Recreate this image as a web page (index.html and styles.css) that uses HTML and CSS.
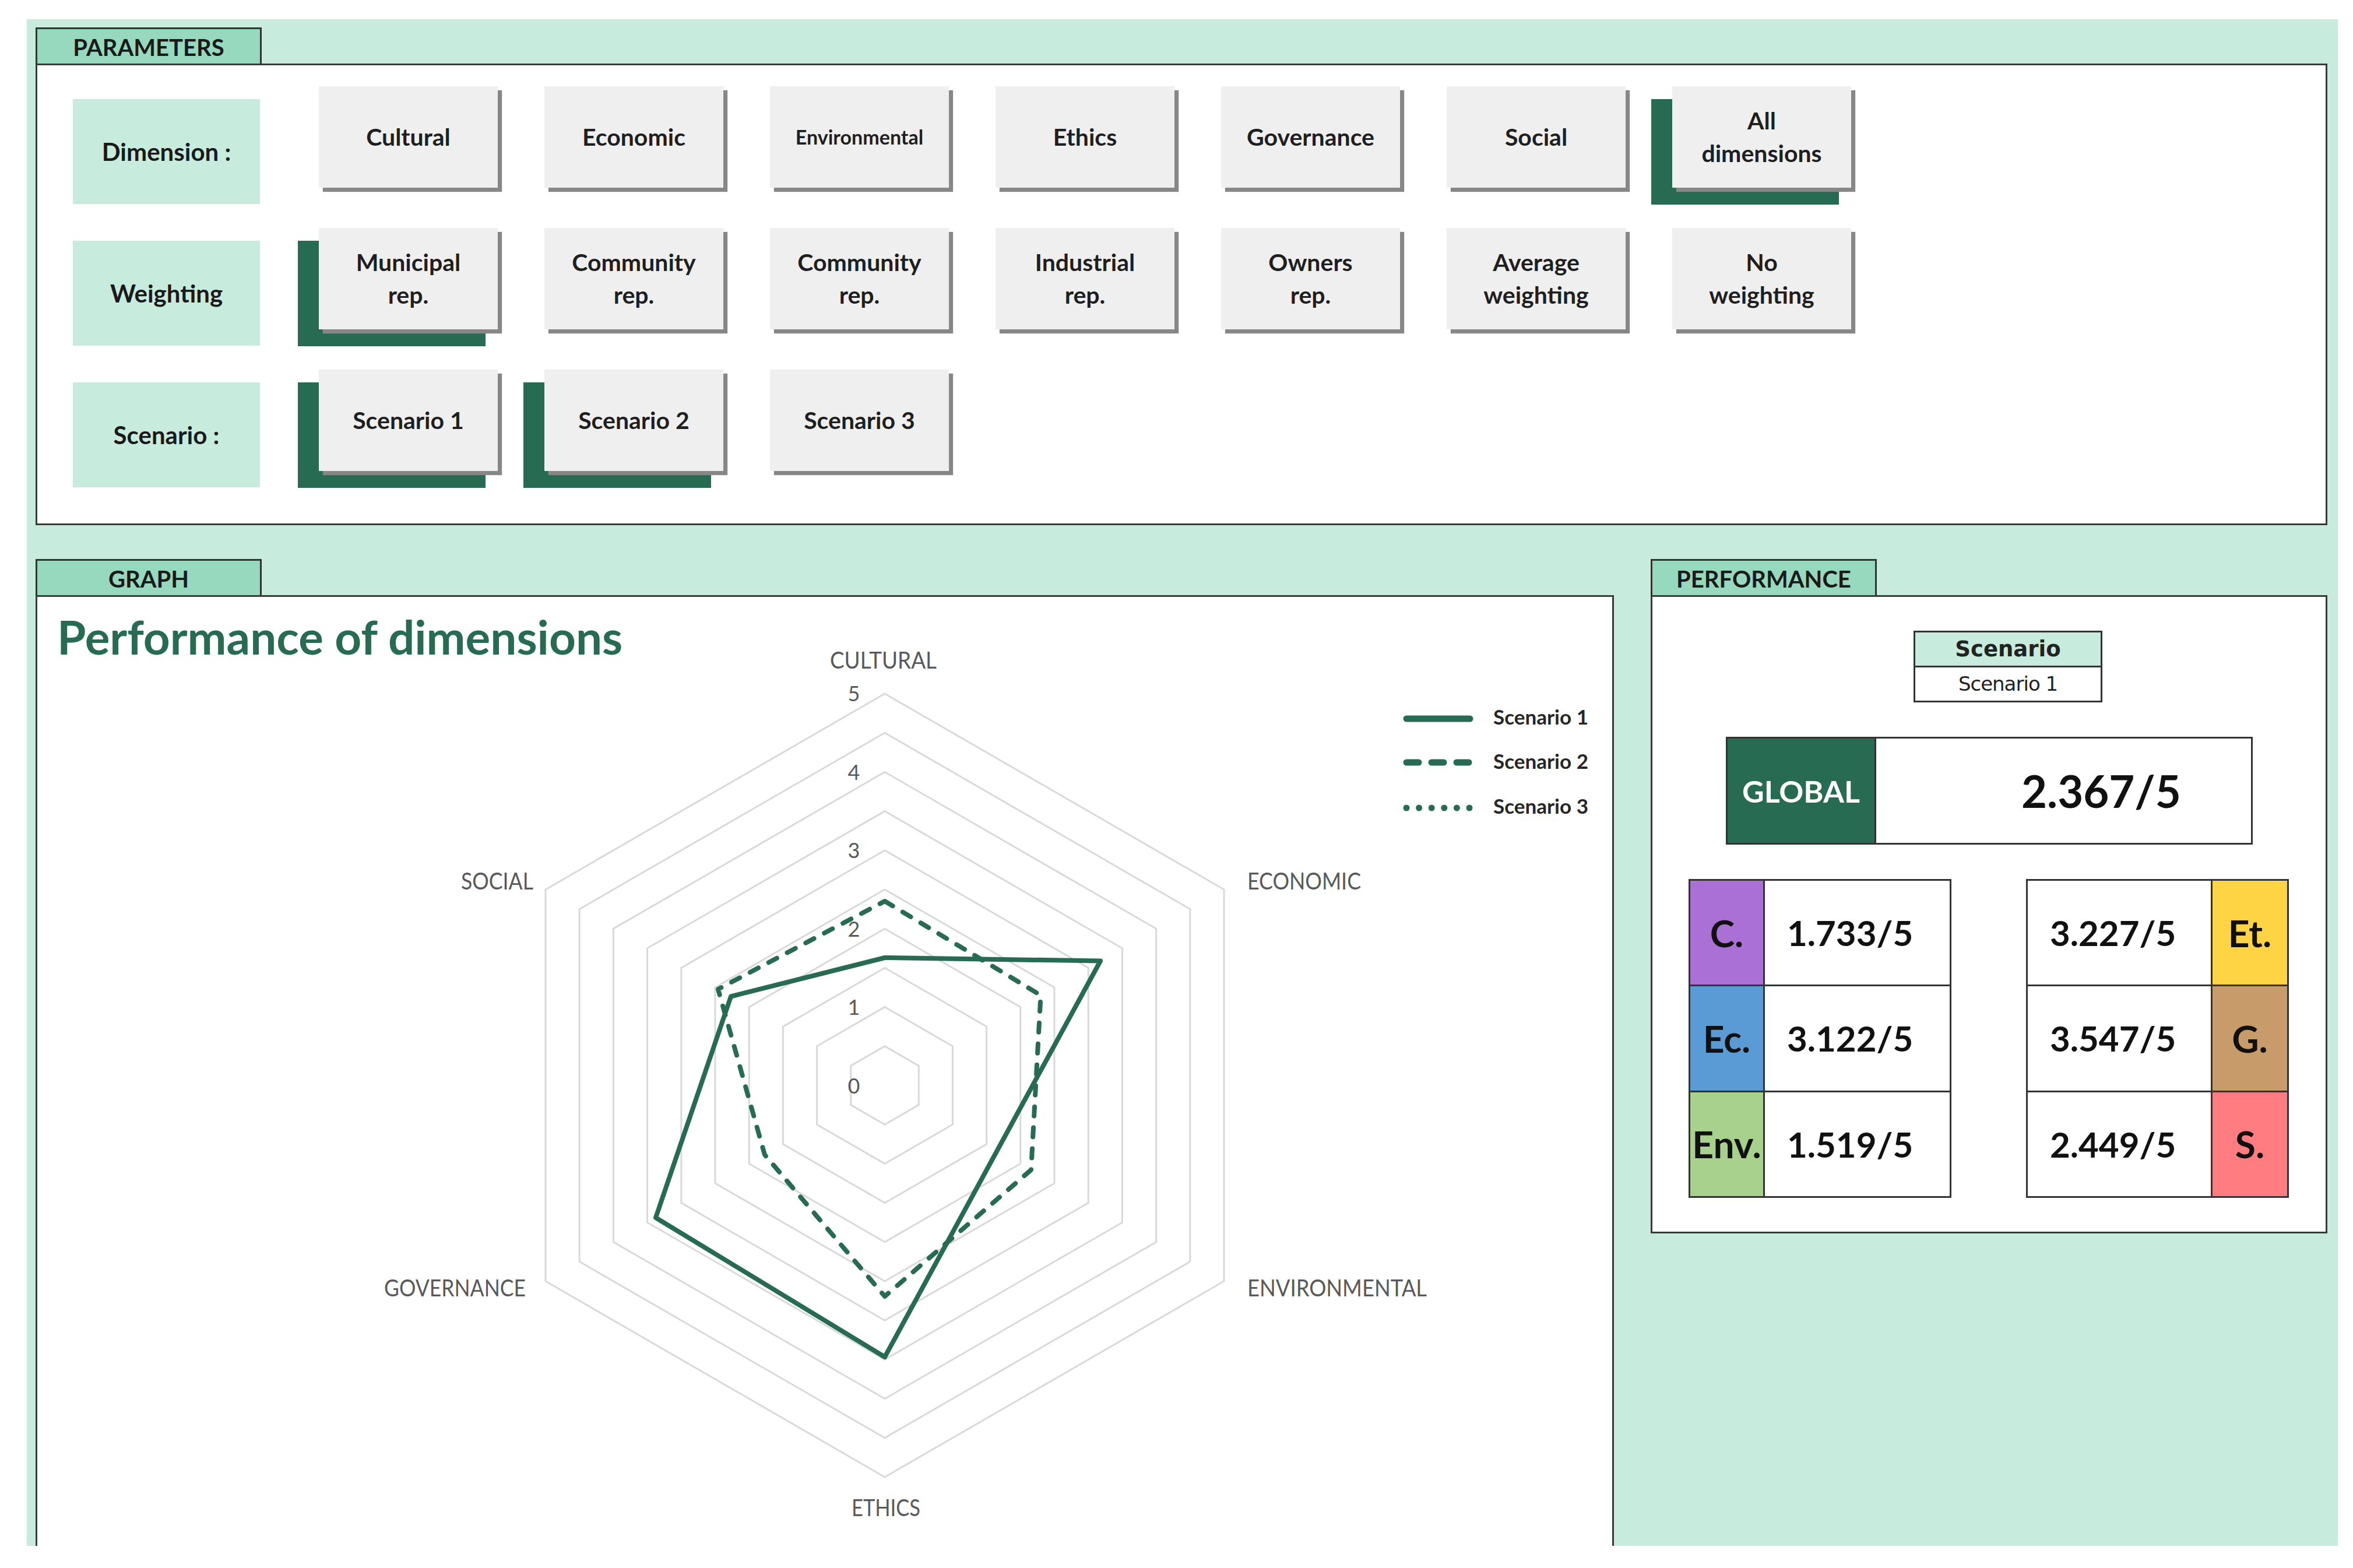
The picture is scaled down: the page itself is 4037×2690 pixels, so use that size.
FILE: index.html
```html
<!DOCTYPE html>
<html lang="en">
<head>
<meta charset="utf-8">
<title>Performance of dimensions</title>
<link rel="stylesheet" href="styles.css">
</head>
<body>
<div class="sheet">
  <section class="panel">
    <div class="tab">PARAMETERS</div>
    <div class="box params-box">
      <div class="prow">
        <div class="plabel">Dimension :</div>
        <div class="slot"><div class="btn">Cultural</div></div>
        <div class="slot"><div class="btn">Economic</div></div>
        <div class="slot"><div class="btn small">Environmental</div></div>
        <div class="slot"><div class="btn">Ethics</div></div>
        <div class="slot"><div class="btn">Governance</div></div>
        <div class="slot"><div class="btn">Social</div></div>
        <div class="slot sel"><div class="btn">All<br>dimensions</div></div>
      </div>
      <div class="prow">
        <div class="plabel">Weighting</div>
        <div class="slot sel"><div class="btn">Municipal<br>rep.</div></div>
        <div class="slot"><div class="btn">Community<br>rep.</div></div>
        <div class="slot"><div class="btn">Community<br>rep.</div></div>
        <div class="slot"><div class="btn">Industrial<br>rep.</div></div>
        <div class="slot"><div class="btn">Owners<br>rep.</div></div>
        <div class="slot"><div class="btn">Average<br>weighting</div></div>
        <div class="slot"><div class="btn">No<br>weighting</div></div>
      </div>
      <div class="prow">
        <div class="plabel">Scenario :</div>
        <div class="slot sel"><div class="btn">Scenario 1</div></div>
        <div class="slot sel"><div class="btn">Scenario 2</div></div>
        <div class="slot"><div class="btn">Scenario 3</div></div>
      </div>
    </div>
  </section>

  <div class="lower">
    <section class="panel graph">
      <div class="tab">GRAPH</div>
      <div class="box graph-box">
        <h2 class="chart-title">Performance of dimensions</h2>
        <svg class="chart" width="2702" height="1610" viewBox="64 1090 2702 1610" xmlns="http://www.w3.org/2000/svg">
          <g class="rings">
            <polygon points="1518,1794.8 1576.2,1828.4 1576.2,1895.6 1518,1929.2 1459.8,1895.6 1459.8,1828.4"/>
            <polygon points="1518,1727.6 1634.4,1794.8 1634.4,1929.2 1518,1996.4 1401.6,1929.2 1401.6,1794.8"/>
            <polygon points="1518,1660.4 1692.6,1761.2 1692.6,1962.8 1518,2063.6 1343.4,1962.8 1343.4,1761.2"/>
            <polygon points="1518,1593.2 1750.8,1727.6 1750.8,1996.4 1518,2130.8 1285.2,1996.4 1285.2,1727.6"/>
            <polygon points="1518,1526 1809,1694 1809,2030 1518,2198 1227,2030 1227,1694"/>
            <polygon points="1518,1458.8 1867.2,1660.4 1867.2,2063.6 1518,2265.2 1168.8,2063.6 1168.8,1660.4"/>
            <polygon points="1518,1391.6 1925.4,1626.8 1925.4,2097.2 1518,2332.4 1110.6,2097.2 1110.6,1626.8"/>
            <polygon points="1518,1324.4 1983.6,1593.2 1983.6,2130.8 1518,2399.6 1052.4,2130.8 1052.4,1593.2"/>
            <polygon points="1518,1257.2 2041.8,1559.6 2041.8,2164.4 1518,2466.8 994.2,2164.4 994.2,1559.6"/>
            <polygon points="1518,1190 2100,1526 2100,2198 1518,2534 936,2198 936,1526"/>
          </g>
          <g class="ticks">
            <text x="1465" y="1203">5</text>
            <text x="1465" y="1338">4</text>
            <text x="1465" y="1472">3</text>
            <text x="1465" y="1607">2</text>
            <text x="1465" y="1741">1</text>
            <text x="1465" y="1876">0</text>
          </g>
          <g class="cats">
            <text x="1424" y="1147" textLength="183" lengthAdjust="spacingAndGlyphs">CULTURAL</text>
            <text x="2140" y="1526" textLength="195" lengthAdjust="spacingAndGlyphs">ECONOMIC</text>
            <text x="2140" y="2224" textLength="308" lengthAdjust="spacingAndGlyphs">ENVIRONMENTAL</text>
            <text x="1461" y="2601" textLength="118" lengthAdjust="spacingAndGlyphs">ETHICS</text>
            <text x="659" y="2224" textLength="243" lengthAdjust="spacingAndGlyphs">GOVERNANCE</text>
            <text x="791" y="1526" textLength="124" lengthAdjust="spacingAndGlyphs">SOCIAL</text>
          </g>
          <polygon class="s2" points="1518,1546 1785.6,1707.5 1769,2007 1518,2224 1312,1981 1232,1697"/>
          <polygon class="s1" points="1518,1643 1888,1648.5 1711,1973.5 1518,2328 1125,2089 1254,1709.5"/>
          <g class="legend">
            <line class="l1" x1="2413" y1="1233" x2="2522" y2="1233"/>
            <line class="l2" x1="2413" y1="1308" x2="2522" y2="1308"/>
            <line class="l3" x1="2413" y1="1386" x2="2525" y2="1386"/>
            <text x="2562" y="1243" textLength="163" lengthAdjust="spacingAndGlyphs">Scenario 1</text>
            <text x="2562" y="1319" textLength="163" lengthAdjust="spacingAndGlyphs">Scenario 2</text>
            <text x="2562" y="1396" textLength="163" lengthAdjust="spacingAndGlyphs">Scenario 3</text>
          </g>
        </svg>
      </div>
    </section>

    <section class="panel perf">
      <div class="tab">PERFORMANCE</div>
      <div class="box perf-box">
        <div class="sc-table">
          <div class="sc-head">Scenario</div>
          <div class="sc-val">Scenario 1</div>
        </div>
        <div class="global">
          <div class="global-label">GLOBAL</div>
          <div class="global-val">2.367/5</div>
        </div>
        <div class="dims">
          <div class="dtable">
            <div class="dk c-cul">C.</div><div class="dv">1.733/5</div>
            <div class="dk c-eco">Ec.</div><div class="dv">3.122/5</div>
            <div class="dk c-env">Env.</div><div class="dv">1.519/5</div>
          </div>
          <div class="dtable right">
            <div class="dv">3.227/5</div><div class="dk c-eth">Et.</div>
            <div class="dv">3.547/5</div><div class="dk c-gov">G.</div>
            <div class="dv">2.449/5</div><div class="dk c-soc">S.</div>
          </div>
        </div>
      </div>
    </section>
  </div>
</div>
</body>
</html>
```

FILE: styles.css
```css
* { box-sizing: border-box; }

html, body {
  margin: 0;
  padding: 0;
  background: #ffffff;
}

body {
  font-family: Lato, "Open Sans", "Liberation Sans", sans-serif;
  color: #1b1b1b;
}

.sheet {
  margin: 33px 0 0 46px;
  width: 3965px;
  height: 2619px;
  background: #c7ebdd;
  padding: 14px 18px 0 15px;
  overflow: hidden;
}

.tab {
  width: 388px;
  height: 62px;
  border: 3px solid #333333;
  border-bottom: 0;
  background: #97d9be;
  font-weight: 700;
  font-size: 40px;
  line-height: 62px;
  text-align: center;
  color: #1a1a1a;
}

.box {
  background: #ffffff;
  border: 3px solid #3a3a3a;
}

/* PARAMETERS */
.params-box {
  display: flex;
  flex-direction: column;
  gap: 63px;
  padding: 58px 0 62px 61px;
}

.prow {
  display: flex;
  gap: 65px;
  height: 180px;
}

.plabel {
  flex: none;
  width: 321px;
  height: 180px;
  background: #c7ebdd;
  display: flex;
  align-items: center;
  justify-content: center;
  font-weight: 700;
  font-size: 42px;
  color: #1a1a1a;
}

.slot {
  flex: none;
  width: 322px;
  height: 181px;
}

.slot.sel {
  background: #276b53;
}

.btn {
  width: 307px;
  height: 174px;
  margin: -22px 0 0 36px;
  background: #efefef;
  box-shadow: 7px 7px 1px #878787;
  display: flex;
  align-items: center;
  justify-content: center;
  text-align: center;
  font-weight: 700;
  font-size: 41px;
  line-height: 56px;
  color: #1f1f1f;
}

.btn.small {
  font-size: 34px;
}

/* LOWER */
.lower {
  display: flex;
  align-items: flex-start;
  gap: 63px;
  margin-top: 58px;
}

.graph {
  flex: none;
  width: 2708px;
}

.graph-box {
  height: 1700px;
  border-bottom: 0;
}

.chart-title {
  margin: 20px 0 0 34px;
  font-size: 80px;
  line-height: 96px;
  font-weight: 700;
  color: #276b53;
}

.chart {
  display: block;
  width: 2702px;
  height: 1610px;
  margin-top: -50px;
}

.rings polygon {
  fill: none;
  stroke: #d9d9d9;
  stroke-width: 3;
}

.ticks text {
  font-family: Lato, sans-serif;
  font-size: 36px;
  fill: #595959;
  text-anchor: middle;
}

.cats text {
  font-family: Lato, sans-serif;
  font-size: 40px;
  fill: #595959;
}

.s1, .s2 {
  fill: none;
  stroke: #276b53;
  stroke-width: 8;
  stroke-linejoin: round;
}

.s2 {
  stroke-dasharray: 16 20;
  stroke-linecap: round;
}

.legend line {
  stroke: #276b53;
  stroke-width: 11;
  stroke-linecap: round;
}

.legend .l2 {
  stroke-dasharray: 21 22;
}

.legend .l3 {
  stroke-dasharray: 0 21.6;
}

.legend text {
  font-family: Lato, sans-serif;
  font-weight: 700;
  font-size: 35px;
  fill: #262626;
}

/* PERFORMANCE */
.perf {
  flex: none;
  width: 1161px;
}

.perf-box {
  height: 1095px;
  padding-top: 58px;
}

.sc-table {
  margin-left: 448px;
  width: 324px;
  border: 3px solid #333333;
  font-family: "DejaVu Sans", Verdana, sans-serif;
  text-align: center;
  color: #222222;
}

.sc-head {
  height: 60px;
  background: #c7ebdd;
  border-bottom: 3px solid #333333;
  font-weight: 700;
  font-size: 37px;
  line-height: 57px;
}

.sc-val {
  height: 57px;
  font-size: 34px;
  line-height: 57px;
  letter-spacing: -1px;
  background: #ffffff;
}

.global {
  margin: 59px 0 0 126px;
  width: 904px;
  height: 185px;
  border: 3px solid #333333;
  background: #333333;
  display: grid;
  grid-template-columns: 252px 1fr;
  gap: 3px;
}

.global-label {
  background: #276b53;
  color: #ffffff;
  font-weight: 700;
  font-size: 52px;
  display: flex;
  align-items: center;
  justify-content: center;
}

.global-val {
  background: #ffffff;
  font-weight: 700;
  font-size: 76px;
  display: flex;
  align-items: center;
  padding-left: 249px;
  color: #111111;
}

.dims {
  display: flex;
  gap: 128px;
  margin: 59px 0 0 62px;
}

.dtable {
  width: 451px;
  height: 547px;
  border: 3px solid #333333;
  background: #333333;
  display: grid;
  grid-template-columns: 125px 1fr;
  grid-template-rows: repeat(3, 1fr);
  gap: 3px;
}

.dtable.right {
  grid-template-columns: 1fr 128px;
}

.dk {
  display: flex;
  align-items: center;
  justify-content: center;
  font-weight: 700;
  font-size: 64px;
  white-space: nowrap;
  color: #111111;
}

.dv {
  background: #ffffff;
  display: flex;
  align-items: center;
  padding-left: 38px;
  font-weight: 700;
  font-size: 60px;
  color: #111111;
}

.c-cul { background: #aa70d6; }
.c-eco { background: #5b9bd5; }
.c-env { background: #a9d18e; }
.c-eth { background: #ffd444; }
.c-gov { background: #c89b6b; }
.c-soc { background: #ff7c80; }
```
